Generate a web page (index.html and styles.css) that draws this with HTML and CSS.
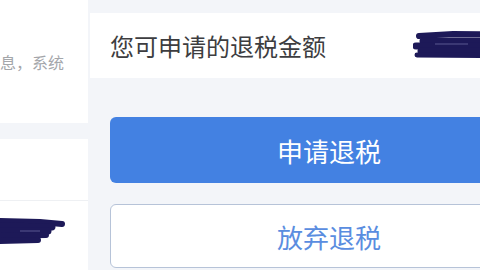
FILE: index.html
```html
<!DOCTYPE html>
<html lang="zh-CN">
<head>
    <meta charset="UTF-8">
    <meta name="viewport" content="width=device-width, initial-scale=1.0">
    <title>申请退税</title>
    <link rel="stylesheet" href="styles.css">
</head>
<body>
    <div class="screen">
        <div class="side-panel">
            <div class="side-block">
                <p class="side-note">息，系统</p>
            </div>
            <div class="side-gap"></div>
            <div class="side-row"></div>
            <div class="side-row side-row-last">
                <svg class="scribble-left" width="70" height="32" viewBox="0 0 70 32">
                    <g stroke="#1d1958" stroke-linecap="round" fill="none">
                        <path d="M-4 5 L40 6 L62 8" stroke-width="6"/>
                        <path d="M-4 10 L52 11" stroke-width="7"/>
                        <path d="M-4 15 L48 15" stroke-width="7"/>
                        <path d="M-4 20 L46 19" stroke-width="6"/>
                        <path d="M-4 25 L38 24" stroke-width="6"/>
                    </g>
                    <path d="M20 15 L40 15" stroke="#5a5890" stroke-width="1"/>
                </svg>
            </div>
        </div>

        <div class="main-panel">
            <div class="amount-card">
                <span class="amount-label">您可申请的退税金额</span>
                <svg class="scribble-right" width="135" height="32" viewBox="0 0 135 32">
                    <g stroke="#1d1958" stroke-linecap="round" fill="none">
                        <path d="M6 6 L40 4 L140 5" stroke-width="6"/>
                        <path d="M10 11 L140 11" stroke-width="7"/>
                        <path d="M3 16 L140 16" stroke-width="7"/>
                        <path d="M8 21 L140 21" stroke-width="7"/>
                        <path d="M4 25 L140 26" stroke-width="5"/>
                    </g>
                    <path d="M22 14 L55 14" stroke="#5a5890" stroke-width="1"/>
                </svg>
            </div>

            <div class="actions">
                <button class="btn btn-primary">申请退税</button>
                <button class="btn btn-outline">放弃退税</button>
            </div>
        </div>
    </div>
</body>
</html>
```

FILE: styles.css
```css
body {
    margin: 0;
    width: 480px;
    height: 270px;
    overflow: hidden;
    background-color: #f3f5f9;
    font-family: "Noto Sans CJK SC", "Noto Sans", sans-serif;
}
.screen {
    display: flex;
    gap: 2px;
    height: 270px;
}
.side-panel {
    width: 88px;
    flex-shrink: 0;
    display: flex;
    flex-direction: column;
    overflow: hidden;
}
.side-block {
    height: 123px;
    background-color: #ffffff;
    display: flex;
    align-items: center;
}
.side-note {
    margin: 0;
    color: #a4a6aa;
    font-size: 16px;
    white-space: nowrap;
}
.side-gap {
    height: 16px;
}
.side-row {
    height: 61px;
    background-color: #ffffff;
    border-bottom: 1px solid #eef0f3;
}
.side-row-last {
    flex: 1;
    border-bottom: none;
    padding-top: 15px;
}
.scribble-left {
    display: block;
}
.main-panel {
    width: 478px;
    flex-shrink: 0;
    padding-top: 13px;
}
.amount-card {
    height: 65px;
    background-color: #ffffff;
    display: flex;
    align-items: center;
    padding: 0 20px;
}
.amount-label {
    font-size: 24px;
    color: #3d3d40;
}
.scribble-right {
    margin-left: auto;
    display: block;
}
.actions {
    display: flex;
    flex-direction: column;
    gap: 21px;
    padding: 39px 20px 0;
}
.btn {
    height: 66px;
    border-radius: 6px;
    font-family: inherit;
    font-size: 26px;
    cursor: pointer;
}
.btn-primary {
    background-color: #4381e2;
    border: none;
    color: #ffffff;
}
.btn-outline {
    height: 64px;
    background-color: #ffffff;
    border: 1px solid #b6c3d8;
    color: #5a8de0;
}
```
